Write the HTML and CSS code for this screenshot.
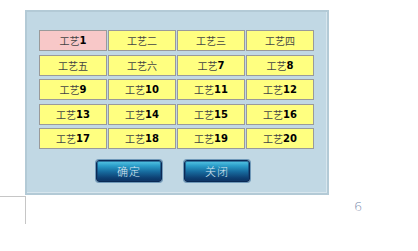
FILE: index.html
```html
<!DOCTYPE html>
<html>
<head>
<meta charset="utf-8">
<link rel="stylesheet" href="styles.css">
</head>
<body>
<div class="panel">
  <div class="grid">
    <div class="cell active"><span class="cn">工艺</span><b>1</b></div>
    <div class="cell"><span class="cn">工艺二</span></div>
    <div class="cell"><span class="cn">工艺三</span></div>
    <div class="cell"><span class="cn">工艺四</span></div>
    <div class="cell"><span class="cn">工艺五</span></div>
    <div class="cell"><span class="cn">工艺六</span></div>
    <div class="cell"><span class="cn">工艺</span><b>7</b></div>
    <div class="cell"><span class="cn">工艺</span><b>8</b></div>
    <div class="cell"><span class="cn">工艺</span><b>9</b></div>
    <div class="cell"><span class="cn">工艺</span><b>10</b></div>
    <div class="cell"><span class="cn">工艺</span><b>11</b></div>
    <div class="cell"><span class="cn">工艺</span><b>12</b></div>
    <div class="cell"><span class="cn">工艺</span><b>13</b></div>
    <div class="cell"><span class="cn">工艺</span><b>14</b></div>
    <div class="cell"><span class="cn">工艺</span><b>15</b></div>
    <div class="cell"><span class="cn">工艺</span><b>16</b></div>
    <div class="cell"><span class="cn">工艺</span><b>17</b></div>
    <div class="cell"><span class="cn">工艺</span><b>18</b></div>
    <div class="cell"><span class="cn">工艺</span><b>19</b></div>
    <div class="cell"><span class="cn">工艺</span><b>20</b></div>
  </div>
  <div class="actions">
    <button class="btn">确定</button>
    <button class="btn">关闭</button>
  </div>
</div>
<div class="footer">
  <div class="corner"></div>
  <div class="page">6</div>
</div>
</body>
</html>
```
FILE: styles.css
```css
html, body {
  margin: 0;
  padding: 0;
  background: #ffffff;
}
body {
  padding-top: 10px;
}
.panel {
  box-sizing: border-box;
  margin-left: 25px;
  width: 304px;
  height: 185px;
  background: #c1d8e4;
  border: 2px solid #b3cad6;
  box-shadow: inset -1px -1px 0 #d7e6ee;
  padding: 18px 0 0 12px;
}
.grid {
  display: grid;
  grid-template-columns: repeat(4, 68px);
  grid-auto-rows: 21px;
  column-gap: 1px;
  row-gap: 3.5px;
}
.cell {
  box-sizing: border-box;
  border: 1px solid #9a9a9a;
  background: #ffff80;
  display: flex;
  align-items: center;
  justify-content: center;
  font-size: 10px;
  color: #333333;
}
.cell.active {
  background: #f8c8c8;
}
.cn {
  font-family: "Noto Sans CJK SC", sans-serif;
  font-size: 10px;
  color: #444444;
}
.cell b {
  font-family: "DejaVu Sans", sans-serif;
  font-weight: bold;
  font-size: 10px;
  color: #000000;
}
.actions {
  display: flex;
  gap: 22px;
  margin: 10.5px 0 0 57px;
}
.btn {
  box-sizing: border-box;
  width: 66px;
  height: 22px;
  padding: 0;
  border: 1px solid #0b2a55;
  border-radius: 3px;
  background: linear-gradient(to bottom, #56c6e4 0%, #2a9cc8 25%, #16699c 55%, #0d3f72 85%, #0a3462 100%);
  box-shadow: 0 0 0 1px #6f98b8, inset 0 0 0 1px rgba(20, 60, 110, 0.6);
  color: #dce8f2;
  font-family: "Noto Sans CJK SC", serif;
  font-size: 11px;
  font-weight: 300;
  letter-spacing: 1px;
}
.footer {
  display: flex;
  align-items: flex-start;
  margin-top: 1px;
}
.corner {
  width: 25px;
  height: 27px;
  border-top: 1px solid #c6c6c6;
  border-right: 1px solid #c6c6c6;
}
.page {
  margin-left: 328px;
  margin-top: 3px;
  font-family: "DejaVu Sans", sans-serif;
  font-size: 13px;
  font-weight: 300;
  color: #8392b0;
}
```
